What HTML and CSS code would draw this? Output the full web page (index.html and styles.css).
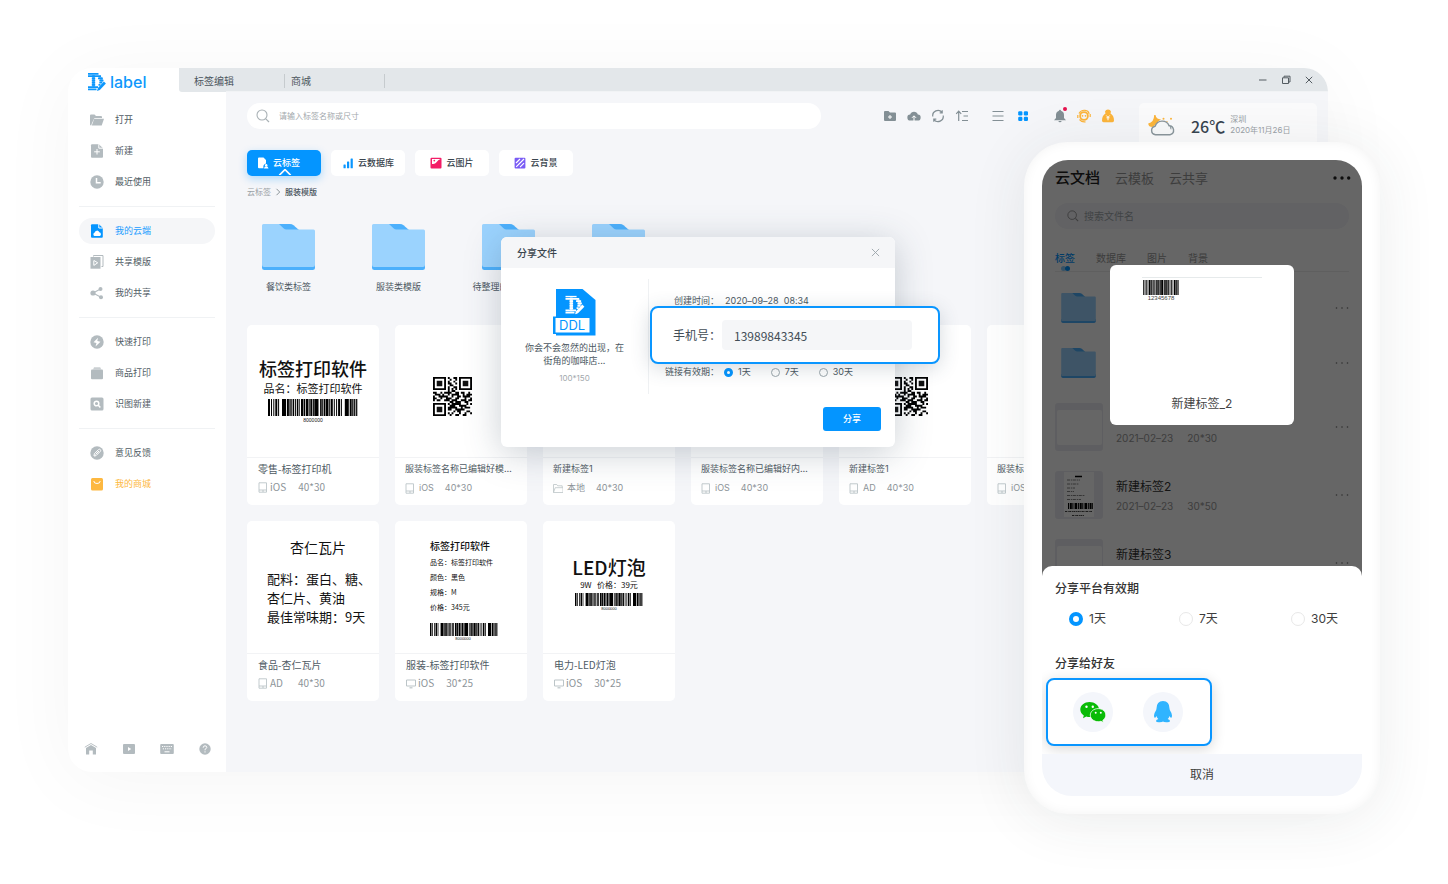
FILE: index.html
```html
<!DOCTYPE html>
<html lang="zh-CN">
<head>
<meta charset="utf-8">
<title>Dlabel</title>
<link rel="stylesheet" href="styles.css">
</head>
<body>
<svg class="defs" aria-hidden="true">
  <symbol id="mark" viewBox="0 0 18 18">
    <path d="M0 .9h10.500M0 3.100h13M3.800 5.300h3.400M10 5.300h4.800M3.800 7.500h3.400M11.300 7.500h4.200M3.800 9.700h3.400M11.300 9.700h3M3.800 11.900h3.400M10.500 11.900h2M0 14.100h10M0 16.300h8.500" fill="none" stroke="currentColor" stroke-width="1.700"/>
    <path d="M4.200 2h2.600v13H4.200z" fill="currentColor" opacity=".75"/>
    <path d="M12 2.500q3 2 3 6l-2.500 1.500q0-4-2-6z" fill="currentColor" opacity=".6"/>
    <path d="M15.900 8.600l2 2-6.100 6.300-2.800 1.100.9-3z" fill="currentColor"/>
  </symbol>
  <symbol id="folder" viewBox="0 0 53 46">
    <path d="M15 0h13q2 0 3.500 1.200L37 6v3H20z" fill="#4cb0fc"/>
    <path d="M0 40h53v3.500q0 2.500-2.500 2.500h-48Q0 46 0 43.500z" fill="#4cb0fc"/>
    <path d="M0 1.500Q0 0 1.500 0H17l4.500 4.200q1.300 1.200 3 1.200h27q1.500 0 1.500 1.500V41q0 2-2 2H2q-2 0-2-2z" fill="#9bd3fe"/>
  </symbol>
  <symbol id="bars" viewBox="0 0 90 17" preserveAspectRatio="none">
    <path d="M0 8.500H90" stroke="#000" stroke-width="17" stroke-dasharray="2 1 1 1.300 1 1 2 .8 1 2.900 4 .9 2 .5 1.300 .6 1 .6 1.200 .8 1 .9 1.300 .6 1 1.300 2.300 .5 1.500 .7 2.200 .5 1 .6 2 .6 1 .4 4.200 1.600 1.600 .5 1.200 .6 1.500 .5 2.500 .7 1 .6"/>
  </symbol>
  <symbol id="qr" viewBox="0 0 21 21">
    <path d="M.5.500h6v6h-6zM14.500.500h6v6h-6zM.5 14.500h6v6h-6z" fill="none" stroke="#000"/>
    <path d="M2 2h3v3H2zM16 2h3v3h-3zM2 16h3v3H2z"/>
    <path d="M8 .5h1M11 .5h2M9 1.500h1M12 1.500h1M8 2.500h1M11 2.500h1M8 3.500h2M12 3.500h1M9 4.500h2M8 5.500h1M11 5.500h2M8 6.500h1M10 6.500h1M12 6.500h1M8 7.500h1M10 7.500h2M0 8.500h2M4 8.500h1M6 8.500h4M12 8.500h2M15 8.500h2M19 8.500h1M1 9.500h3M5 9.500h1M8 9.500h1M10 9.500h4M16 9.500h1M18 9.500h3M0 10.500h1M3 10.500h5M10 10.500h1M13 10.500h2M16 10.500h4M0 11.500h2M4 11.500h1M7 11.500h3M12 11.500h2M17 11.500h1M20 11.500h1M0 12.500h1M2 12.500h2M6 12.500h3M10 12.500h3M15 12.500h3M19 12.500h2M9 13.500h2M12 13.500h3M17 13.500h2M8 14.500h1M10 14.500h5M18 14.500h1M20 14.500h1M9 15.500h3M14 15.500h4M8 16.500h5M15 16.500h1M17 16.500h3M8 17.500h2M12 17.500h5M11 18.500h1M13 18.500h2M18 18.500h2M8 19.500h1M10 19.500h1M14 19.500h1M17 19.500h1M20 19.500h1M9 20.500h1M12 20.500h2M16 20.500h2" stroke="#000" stroke-width="1.050"/>
  </symbol>
  <symbol id="magnifier" viewBox="0 0 14 14">
    <circle cx="6" cy="6" r="5" fill="none" stroke="currentColor" stroke-width="1.100"/><path d="M9.800 9.800L13 13" stroke="currentColor" stroke-width="1.200"/>
  </symbol>
  <symbol id="tablet" viewBox="0 0 10 11"><path d="M1 .8h7.500v9.400H1zM1 8h7.500" fill="none" stroke="currentColor" stroke-width=".9"/><path d="M4 9h2" stroke="currentColor"/></symbol>
  <symbol id="monitor" viewBox="0 0 10 11"><path d="M.5 2h9v6h-9z" fill="none" stroke="currentColor" stroke-width="1"/><path d="M3.500 9.800h3" stroke="currentColor" stroke-width="1.200"/></symbol>
  <symbol id="local" viewBox="0 0 10 11"><path d="M.5 9.500v-8h3.200l1 1.300h4.500v1.700M.5 9.500l1.700-4.800H10v4.800z" fill="none" stroke="currentColor" stroke-width=".8"/></symbol>
  <symbol id="more" viewBox="0 0 14 4"><circle cx="1.500" cy="2" r=".8"/><circle cx="7" cy="2" r=".8"/><circle cx="12.500" cy="2" r=".8"/></symbol>
</svg>

<div class="stage">
  <div class="window">
    <header class="titlebar">
      <div class="brand"><svg class="brand-mark"><use href="#mark"/></svg><span>label</span></div>
      <nav class="doc-tabs">
        <button class="doc-tab">标签编辑</button>
        <button class="doc-tab doc-tab-second">商城</button>
        <div class="win-controls">
          <button aria-label="最小化"><svg viewBox="0 0 10 10"><path d="M1 5h7.500"/></svg></button>
          <button aria-label="还原"><svg viewBox="0 0 10 10"><path d="M1.500 2.800h6v5.700h-6zM3 2.500V1.200h6v5.800H7.800"/></svg></button>
          <button aria-label="关闭"><svg viewBox="0 0 10 10"><path d="M1.800 1.800l6.400 6.400M8.200 1.800L1.800 8.200"/></svg></button>
        </div>
      </nav>
    </header>

    <div class="body">
      <aside class="sidebar">
        <nav class="menu">
          <div class="menu-group">
            <a class="item" href="#"><svg viewBox="0 0 14 14"><path d="M0 2.500q0-1 1-1h3.500L6 3h5q1 0 1 1v1H4.500L2 10l-.8 2.500Q0 12.500 0 11.500z"/><path d="M4.200 5.800H14l-2.300 6.700H1.800z"/></svg>打开</a>
            <a class="item" href="#"><svg viewBox="0 0 14 14"><path d="M1 1.200q0-1 1-1h6.800L13 4.200v8.500q0 1-1 1H2q-1 0-1-1z"/><path d="M7 5v5.500M4.200 7.800h5.600M8.800.200v4H13" class="cut"/></svg>新建</a>
            <a class="item" href="#"><svg viewBox="0 0 14 14"><circle cx="7" cy="7" r="6.700"/><path d="M6.500 3v4.800h4.200" class="cut thick"/></svg>最近使用</a>
          </div>
          <div class="menu-group">
            <a class="item active" href="#"><svg viewBox="0 0 14 14"><path d="M1 1.200q0-1 1-1h7L12.800 4v8.700q0 1-1 1H2q-1 0-1-1z"/><path d="M8.800 0v4h4" class="cut"/><path d="M4.500 12a1.700 1.700 0 010-3.200 2.500 2.500 0 014.800-.6 2 2 0 01.5 3.800z" class="paper"/></svg>我的云端</a>
            <a class="item" href="#"><svg viewBox="0 0 14 14"><path d="M3.500 1.500V.500H13V11.500H11.500" fill="none" stroke="currentColor"/><path d="M.5 2h10v11.700H.500z"/><path d="M3.800 5.500v5M4 5.500l3.700 2.300L4 10.300" class="cut"/></svg>共享模版</a>
            <a class="item" href="#"><svg viewBox="0 0 14 14"><circle cx="3" cy="7" r="2.600"/><circle cx="10.500" cy="3" r="2"/><circle cx="11" cy="11.200" r="2"/><path d="M10.500 3L3 7l8 4.200" fill="none" stroke="currentColor" stroke-width="1.100"/></svg>我的共享</a>
          </div>
          <div class="menu-group">
            <a class="item" href="#"><svg viewBox="0 0 14 14"><circle cx="7" cy="7" r="6.700"/><path d="M8 2.800L3.500 7.200l3 .8-1 3.400 5-4.600-3.200-.9z" class="paper"/></svg>快速打印</a>
            <a class="item" href="#"><svg viewBox="0 0 14 14"><path d="M3 3.500l1-2.200h6.200l1 2.200z" opacity=".7"/><path d="M1 4.500q0-1 1-1h10q1 0 1 1v7.700q0 1-1 1H2q-1 0-1-1z"/></svg>商品打印</a>
            <a class="item" href="#"><svg viewBox="0 0 14 14"><rect x=".5" y=".5" width="13" height="13" rx="1.500"/><circle cx="6.500" cy="6.500" r="2.300" class="cut thick"/><path d="M8.300 8.300l2 2.200" class="cut thick"/></svg>识图新建</a>
          </div>
          <div class="menu-group">
            <a class="item" href="#"><svg viewBox="0 0 14 14"><circle cx="7" cy="7" r="6.700"/><path d="M4 10l.3-2.200L8.500 3.600q1-.8 1.800 0t0 1.800L6 9.700zM5.500 8.500L9 5" class="cut"/></svg>意见反馈</a>
            <a class="item mall" href="#"><svg viewBox="0 0 14 14"><rect x="1" y="1" width="12" height="12.500" rx="1.500"/><path d="M3.800 4q0 2.500 3.200 2.500T10.200 4" class="cut"/></svg>我的商城</a>
          </div>
        </nav>
        <div class="side-tools">
          <button aria-label="主页"><svg viewBox="0 0 14 14"><path d="M.8 5.200L7 1.500l6.200 3.700" fill="none" stroke="currentColor" stroke-width=".9"/><path d="M2 6l5-3 5 3v6.500H8.800V8.500H5.200v4H2z"/></svg></button>
          <button aria-label="视频"><svg viewBox="0 0 14 14"><rect x="1" y="2" width="12" height="10" rx="1"/><path d="M6 5l3.200 2L6 9z" class="paper"/></svg></button>
          <button aria-label="键盘"><svg viewBox="0 0 14 14"><rect x=".2" y="2" width="13.600" height="10" rx="1"/><path d="M2 4.500h10M2.800 6.800h9" class="cut" stroke-dasharray="1.200 1"/><path d="M4.500 9.800h5" class="cut"/></svg></button>
          <button aria-label="帮助"><svg viewBox="0 0 14 14"><circle cx="7" cy="7" r="5.700"/><path d="M5.200 5.700q0-1.900 1.800-1.900t1.800 1.600q0 1-1.800 1.900v1M7 9.300v1.200" class="cut"/></svg></button>
        </div>
      </aside>

      <main class="main">
        <div class="toolbar">
          <label class="search"><svg><use href="#magnifier"/></svg><input type="text" aria-label="搜索标签" placeholder="请输入标签名称或尺寸"></label>
          <div class="tools tools-file">
            <button aria-label="新建文件夹"><svg viewBox="0 0 14 14"><path d="M1 3q0-1 1-1h3.500L7 3.500h5q1 0 1 1V11q0 1-1 1H2q-1 0-1-1z"/><path d="M7 6v4M5 8h4" class="cut"/></svg></button>
            <button aria-label="上传"><svg viewBox="0 0 14 14"><path d="M3.500 11.500a3 3 0 01-.3-6 4 4 0 017.600 0 3 3 0 01-.3 6z"/><path d="M7 12.500V7M5 8.800l2-2 2 2" class="cut"/></svg></button>
            <button aria-label="刷新"><svg viewBox="0 0 14 14" class="line"><path d="M1.800 7.500A5.200 5.200 0 0111 3.400M12.200 6.500A5.200 5.200 0 013 10.600M11.200 1.200v2.600H8.700M2.800 12.800v-2.600h2.500"/></svg></button>
            <button aria-label="排序"><svg viewBox="0 0 14 14" class="line"><path d="M3.700 12V2M1.200 4.800L3.700 2.200l2.500 2.600M7 2.500h6M8.500 7H13M7 11.500h6"/></svg></button>
          </div>
          <div class="tools tools-view">
            <button aria-label="列表"><svg viewBox="0 0 14 14" class="line"><path d="M1.500 2.500h11M1.500 7h11M1.500 11.500h11"/></svg></button>
            <button class="on" aria-label="网格"><svg viewBox="0 0 14 14"><rect x="2.200" y="2.200" width="4.200" height="4.200" rx="1.200"/><rect x="7.800" y="2.200" width="4.200" height="4.200" rx="1.200"/><rect x="2.200" y="7.800" width="4.200" height="4.200" rx="1.200"/><rect x="7.800" y="7.800" width="4.200" height="4.200" rx="1.200"/></svg></button>
          </div>
          <div class="tools tools-user">
            <button class="bell" aria-label="通知"><svg viewBox="0 0 14 14"><path d="M7 .8q1 0 1 1Q11 2.800 11 6v3l2 2.200H1L3 9V6q0-3.200 3-4.200 0-1 1-1zM5.300 12h3.400q-.5 1.200-1.700 1.200T5.300 12z"/></svg></button>
            <button class="gold" aria-label="客服"><svg viewBox="0 0 14 14"><circle cx="7" cy="7" r="3.900" fill="none" stroke="currentColor" stroke-width="1.800"/><path d="M2 4.500Q4 .8 8 1.300t4 3.700M.8 6v3M13.200 5v3M2.500 10.500Q5 13.500 8.500 12.800" fill="none" stroke="currentColor" stroke-width="1.200"/><circle cx="5.500" cy="6.800" r=".9"/><circle cx="8.500" cy="6.800" r=".9"/></svg></button>
            <button class="gold" aria-label="钱袋"><svg viewBox="0 0 14 14"><path d="M4 2.500Q4.700.5 7 .5t3 2L9.500 4.500Q13 6.500 13 11.500q0 1.700-1.500 1.700h-9Q1 13.200 1 11.500 1 6.500 4.500 4.500z"/><path d="M5.300 6.500L7 8.300l1.700-1.800M5.500 8.800h3M7 8.300v3" class="cut"/></svg></button>
          </div>
          <section class="weather">
            <svg viewBox="0 0 28 24"><path d="M7.500 1q.5 4 5.500 4.500-3 1-4.500 4.500l-4 3Q.5 13 .2 9.500 6 8.500 6.200 1z" fill="#fcb53b"/><circle cx="15.500" cy="4.800" r="1" fill="#fcb53b"/><circle cx="23" cy="4.800" r="1" fill="#fcb53b"/><circle cx="19" cy="7.600" r=".7" fill="#fcb53b"/><path d="M7.500 20.700a4.300 4.300 0 01-.4-8.500 7.500 7.500 0 0114-.5 4.600 4.600 0 011.200 9z" fill="#f8f9fa" stroke="#8a969c" stroke-width="1.400"/><path d="M20 10.300q3.300 1.300 3 5" fill="none" stroke="#8a969c" stroke-width="1"/></svg>
            <strong>26℃</strong>
            <p>深圳<br>2020年11月26日</p>
          </section>
        </div>

        <nav class="filters">
          <button class="filter current"><svg viewBox="0 0 12 12"><path d="M1 1.500Q1 .5 2 .5h4.500L9 3v3.500a4 4 0 00-2.500 4.800H2q-1 0-1-1z"/><path d="M7 11.500q.3-2.300 2.200-2.300t2.300 2.300z"/><circle cx="9.200" cy="8.300" r="1.200"/></svg>云标签</button>
          <button class="filter"><svg class="blue" viewBox="0 0 12 12"><rect x="1.500" y="7.500" width="2.200" height="3.800" rx=".5"/><rect x="5" y="4.500" width="2.200" height="6.800" rx=".5"/><rect x="8.600" y="1.500" width="2.200" height="9.800" rx=".5"/></svg>云数据库</button>
          <button class="filter"><svg viewBox="0 0 12 12"><rect x=".5" y=".8" width="11" height="10.600" rx="1" fill="#f31d67"/><path d="M2 2h8.500q-2.500 1-4 3.300T2 7z" fill="#fff"/><circle cx="4.300" cy="3.600" r=".9" fill="#f31d67"/></svg>云图片</button>
          <button class="filter"><svg viewBox="0 0 12 12"><rect x=".6" y=".8" width="10.800" height="10.600" rx="1" fill="#7a5cf5"/><path d="M2 6l4-4M2.200 9.800l7.800-7.800M6 10.200l4-4" stroke="#fff" stroke-width="1.200"/></svg>云背景</button>
        </nav>

        <div class="crumbs"><a href="#">云标签</a><svg viewBox="0 0 6 8"><path d="M1.500.8L4.700 4 1.500 7.200"/></svg><span>服装模版</span></div>

        <div class="folders">
          <a class="folder" href="#"><svg><use href="#folder"/></svg><span>餐饮类标签</span></a>
          <a class="folder" href="#"><svg><use href="#folder"/></svg><span>服装类模版</span></a>
          <a class="folder" href="#"><svg><use href="#folder"/></svg><span>待整理的标签模版</span></a>
          <a class="folder" href="#"><svg><use href="#folder"/></svg><span>其他</span></a>
        </div>

        <div class="cards">
          <article class="card alt">
            <div class="art art-soft"><b>标签打印软件</b><span>品名：标签打印软件</span><svg class="bar"><use href="#bars"/></svg><i>8000000</i></div>
            <div class="foot"><h3>零售-标签打印机</h3><p><svg><use href="#tablet"/></svg><span>iOS</span><span>40*30</span></p></div>
          </article>
          <article class="card">
            <div class="art art-qr"><svg><use href="#qr"/></svg></div>
            <div class="foot"><h3>服装标签名称已编辑好模…</h3><p><svg><use href="#tablet"/></svg><span>iOS</span><span>40*30</span></p></div>
          </article>
          <article class="card">
            <div class="art"></div>
            <div class="foot"><h3>新建标签1</h3><p><svg><use href="#local"/></svg><span>本地</span><span>40*30</span></p></div>
          </article>
          <article class="card">
            <div class="art"></div>
            <div class="foot"><h3>服装标签名称已编辑好内…</h3><p><svg><use href="#tablet"/></svg><span>iOS</span><span>40*30</span></p></div>
          </article>
          <article class="card">
            <div class="art art-qr art-qr-right"><svg><use href="#qr"/></svg></div>
            <div class="foot"><h3>新建标签1</h3><p><svg><use href="#tablet"/></svg><span>AD</span><span>40*30</span></p></div>
          </article>
          <article class="card">
            <div class="art"></div>
            <div class="foot"><h3>服装标签</h3><p><svg><use href="#tablet"/></svg><span>iOS</span></p></div>
          </article>
        </div>
        <div class="cards">
          <article class="card alt">
            <div class="art art-food"><b>杏仁瓦片</b><span>配料：蛋白、糖、<br>杏仁片、黄油<br>最佳常味期：9天</span></div>
            <div class="foot"><h3>食品-杏仁瓦片</h3><p><svg><use href="#tablet"/></svg><span>AD</span><span>40*30</span></p></div>
          </article>
          <article class="card alt">
            <div class="art art-wear"><b>标签打印软件</b><span>品名：标签打印软件<br>颜色：黑色<br>规格：M<br>价格：345元</span><svg class="bar"><use href="#bars"/></svg><i>8000000</i></div>
            <div class="foot"><h3>服装-标签打印软件</h3><p><svg><use href="#monitor"/></svg><span>iOS</span><span>30*25</span></p></div>
          </article>
          <article class="card alt">
            <div class="art art-led"><b>LED灯泡</b><span>9W&nbsp;&nbsp; 价格：39元</span><svg class="bar"><use href="#bars"/></svg><i>8000000</i></div>
            <div class="foot"><h3>电力-LED灯泡</h3><p><svg><use href="#monitor"/></svg><span>iOS</span><span>30*25</span></p></div>
          </article>
        </div>

        <section class="dialog" role="dialog" aria-label="分享文件">
          <header><h2>分享文件</h2><button aria-label="关闭"><svg viewBox="0 0 10 10"><path d="M1 1l8 8M9 1L1 9"/></svg></button></header>
          <div class="dialog-body">
            <div class="file">
              <svg viewBox="0 0 43 47">
                <path d="M3 0h26.500L42.500 11v35.500H3z" fill="#0495ff"/>
                <path d="M0 27.500h3v17.500H0z" fill="#0495ff"/>
                <path d="M2.500 29H36.500V43.500H2.500z" fill="#fff"/>
                <svg class="white" x="12" y="6.500" width="20" height="19"><use href="#mark"/></svg>
                <text x="6" y="41" class="ddl">DDL</text>
              </svg>
              <p>你会不会忽然的出现，在<br>街角的咖啡店...</p>
              <small>100*150</small>
            </div>
            <form class="share-form">
              <div class="row row-date"><span class="row-label">创建时间：</span><span>2020–09–28&nbsp; 08:34</span></div>
              <div class="row row-period"><span class="row-label">链接有效期：</span>
                <label><input type="radio" name="period" checked>1天</label>
                <label><input type="radio" name="period">7天</label>
                <label><input type="radio" name="period">30天</label>
              </div>
              <button type="button" class="submit">分享</button>
            </form>
          </div>
          <div class="phone-field"><label for="tel">手机号：</label><input id="tel" type="text" value="13989843345"></div>
        </section>
      </main>
    </div>
  </div>

  <div class="phone">
    <div class="screen">
      <div class="app">
        <header class="app-head"><h1>云文档</h1><a href="#">云模板</a><a href="#">云共享</a><button aria-label="更多"><svg viewBox="0 0 18 4"><circle cx="2" cy="2" r="1.700"/><circle cx="9" cy="2" r="1.700"/><circle cx="15.700" cy="2" r="1.700"/></svg></button></header>
        <label class="app-search"><svg><use href="#magnifier"/></svg><input type="text" aria-label="搜索文件" placeholder="搜索文件名"></label>
        <nav class="app-tabs"><a class="sel" href="#">标签</a><a href="#">数据库</a><a href="#">图片</a><a href="#">背景</a></nav>
        <ul class="app-folders">
          <li><svg class="mini"><use href="#folder"/></svg><svg class="more"><use href="#more"/></svg></li>
          <li><svg class="mini"><use href="#folder"/></svg><svg class="more"><use href="#more"/></svg></li>
        </ul>
        <ul class="app-files">
          <li><div class="thumb"></div><div class="info"><h4>新建标签1</h4><p>2021–02–23<span>20*30</span></p></div><svg class="more"><use href="#more"/></svg></li>
          <li><div class="thumb receipt"><svg viewBox="0 0 30 44"><path d="M11 4h7" stroke="#000" stroke-width="1.500"/><path d="M3 7.500h13M3 11.500h12M3 15.500h8M3 19h7M3 23h18M3 27h14" stroke="#666" stroke-width=".8" stroke-dasharray="3 .8 1.500 .6"/><path d="M4 33.500h25" stroke="#000" stroke-width="6" stroke-dasharray="1 .8 2 .6 1 1.200 2.500 .8"/><path d="M1 39h27M8 43h12" stroke="#444" stroke-width="1.200" stroke-dasharray="2 .7 1 .5"/></svg></div><div class="info"><h4>新建标签2</h4><p>2021–02–23<span>30*50</span></p></div><svg class="more"><use href="#more"/></svg></li>
          <li><div class="thumb"></div><div class="info"><h4>新建标签3</h4><p>2021–02–23<span>20*30</span></p></div><svg class="more"><use href="#more"/></svg></li>
        </ul>
      </div>
      <div class="shade"></div>
      <div class="preview">
        <div class="preview-art"><svg><use href="#bars"/></svg><span>12345678</span></div>
        <p>新建标签_2</p>
      </div>
      <section class="sheet">
        <h2>分享平台有效期</h2>
        <div class="sheet-radios">
          <label><input type="radio" name="term" checked>1天</label>
          <label><input type="radio" name="term">7天</label>
          <label><input type="radio" name="term">30天</label>
        </div>
        <h2>分享给好友</h2>
        <div class="friends">
          <button aria-label="微信"><svg viewBox="0 0 26 22"><path d="M9.500 1C4.500 1 .3 4.200.3 8.500c0 2.500 1.400 4.600 3.500 6L3 17.200l3.300-1.700q1.600.5 3.200.5C14.500 16 19 12.800 19 8.500S14.500 1 9.500 1z" fill="#09bb07"/><circle cx="6.500" cy="5.700" r="1.200" fill="#fff"/><circle cx="12.800" cy="5.700" r="1.200" fill="#fff"/><path d="M18.200 7.600c-4.400 0-7.900 2.900-7.900 6.500s3.500 6.600 7.900 6.600q1.500 0 2.700-.4l2.500 1.300-.6-2.200c1.900-1.200 3-3.100 3-5.300 0-3.600-3.300-6.500-7.600-6.500z" fill="#09bb07" stroke="#fff" stroke-width=".8"/><circle cx="15.700" cy="11.800" r="1" fill="#fff"/><circle cx="20.800" cy="11.800" r="1" fill="#fff"/></svg></button>
          <button aria-label="QQ"><svg viewBox="0 0 26 22"><path d="M13 0Q6.500.3 6.500 7.500L6.200 9Q4.200 12 4 14.500q0 2.500 1 2.300.8-.3 1.500-1.800.5 2 1.800 3-2.600 1-2.300 2.300.5 1.200 3.500 1t3.500-.9q.5.700 3.500.9t3.500-1q.3-1.300-2.300-2.300 1.300-1 1.800-3 .7 1.500 1.500 1.800 1 .2 1-2.300Q21.800 12 19.800 9l-.3-1.500Q19.500.3 13 0z" fill="#30b4ff"/></svg></button>
        </div>
        <button class="cancel">取消</button>
      </section>
    </div>
  </div>
</div>
</body>
</html>
```
FILE: styles.css
```css
* { box-sizing: border-box; }
body, h1, h2, h3, h4, p, ul { margin: 0; padding: 0; font-weight: 400; }
body { background: #fff; color: #4b5761; font: 9px/14px Inter, "Noto Sans CJK SC", sans-serif; font-feature-settings: "calt" 0; }
ul { list-style: none; }
a { color: inherit; text-decoration: none; }
button, input { font: inherit; font-feature-settings: inherit; color: inherit; border: 0; background: none; padding: 0; margin: 0; outline: 0; }
svg { display: block; fill: currentColor; flex: none; }
.defs { position: absolute; width: 0; height: 0; }
.cut { fill: none; stroke: #fff; stroke-width: 1; }
.cut.thick { stroke-width: 1.5; }
.paper { fill: #fff; }
.white { color: #fff; }
.line { fill: none; stroke: currentColor; stroke-width: 1.2; }

.stage { position: relative; min-height: 100vh; padding: 68px 120px 112px 68px; overflow: hidden; }

/* Desktop window */
.window { display: flex; flex-direction: column; min-height: 704px; border-radius: 24px; overflow: hidden; background: #fff; box-shadow: 0 8px 80px rgba(0, 0, 0, .045); }
.titlebar { display: flex; height: 24px; }
.brand { display: flex; align-items: center; gap: 4px; width: 111px; padding: 3px 0 0 20px; color: #0d97fc; font-size: 16px; font-weight: 500; }
.brand-mark { width: 18px; height: 18px; }
.doc-tabs { flex: 1; display: flex; align-items: center; background: #e3e7ea; border-bottom-left-radius: 3px; }
.doc-tab { width: 106px; height: 14px; margin-top: 2px; padding-left: 15px; border-right: 1px solid #c6cbce; text-align: left; font-size: 10px; color: #4c565e; }
.doc-tab-second { width: 100px; padding-left: 6px; }
.win-controls { display: flex; gap: 13px; margin: 0 14px 0 auto; }
.win-controls svg { width: 10px; height: 10px; fill: none; stroke: #545c62; stroke-width: 1; }
.body { flex: 1; display: flex; }

.sidebar { display: flex; flex-direction: column; justify-content: space-between; width: 158px; padding: 15px 11px 16px; }
.menu-group { display: flex; flex-direction: column; gap: 5px; }
.menu-group + .menu-group { margin-top: 11px; padding-top: 11px; border-top: 1px solid #f0f2f4; }
.item { display: flex; align-items: center; gap: 11px; height: 26px; padding-left: 11px; border-radius: 13px; color: #4f5b64; }
.item svg { width: 14px; height: 14px; color: #b3bbbf; }
.item.active { background: #f5f6f8; color: #1a9cff; }
.item.active svg { color: #0495ff; }
.item.mall, .item.mall svg { color: #fdb840; }
.side-tools { display: flex; gap: 24px; padding-left: 5px; color: #b3bbbf; }
.side-tools svg { width: 14px; height: 14px; }

.main { position: relative; flex: 1; min-width: 0; padding: 11px 11px 0 21px; background: #f5f6f9; border-top: 1px solid #f1f3f5; margin-top: -1px; }
.toolbar { display: flex; align-items: flex-start; height: 26px; }
.search { flex: 1; display: flex; align-items: center; gap: 9px; height: 26px; padding-left: 9px; border-radius: 13px; background: #fff; color: #a9b1b5; }
.search svg { width: 14px; height: 14px; }
.search input { flex: 1; font-size: 8px; }
input::placeholder { color: #a3a9ad; opacity: 1; }
.tools { display: flex; align-items: center; gap: 10px; height: 26px; color: #838f95; }
.tools svg { width: 14px; height: 14px; }
.tools-file { margin-left: 62px; }
.tools-view { gap: 11px; margin-left: 22px; }
.tools-user { margin: 0 24px 0 23px; }
.tools .on { color: #0495ff; }
.tools .gold { color: #fcb53b; }
.bell { position: relative; }
.bell::after { content: ""; position: absolute; top: -2px; right: 0; width: 4px; height: 4px; border-radius: 50%; background: #e5134f; }
.weather { display: flex; align-items: flex-start; width: 178px; height: 60px; padding: 11px 0 0 9px; border-radius: 5px; background: #fbfbfc; }
.weather svg { width: 28px; height: 24px; }
.weather strong { margin: 2px 5px 0 15px; font: 500 16px/20px "Noto Sans CJK SC", sans-serif; color: #38444f; }
.weather p { font-size: 8px; line-height: 11px; color: #9aa1a6; white-space: nowrap; }

.filters { display: flex; gap: 10px; margin-top: 21px; }
.filter { display: flex; align-items: center; justify-content: center; gap: 4px; width: 74px; height: 26px; border-radius: 5px; background: #fff; font-weight: 500; color: #39444d; }
.filter svg { width: 12px; height: 12px; }
.filter .blue { color: #0a96ff; }
.filter.current { position: relative; justify-content: flex-start; padding-left: 10px; background: #0495ff; color: #fff; box-shadow: 0 3px 8px rgba(4, 149, 255, .3); }
.filter.current::after { content: ""; position: absolute; left: 33px; bottom: -4px; width: 6px; height: 6px; border: 2px solid #f5f6f9; border-radius: 2px; background: #0495ff; transform: rotate(45deg); clip-path: polygon(0 0, 100% 0, 0 100%); }
.crumbs { display: flex; align-items: center; gap: 4px; margin-top: 10px; font-size: 8px; line-height: 12px; color: #49545d; }
.crumbs a { color: #9aa1a6; }
.crumbs svg { width: 6px; height: 8px; fill: none; stroke: #8b9499; }
.crumbs span { font-weight: 500; }

.folders { display: flex; gap: 57px; margin: 26px 0 31px 15px; }
.folder { display: flex; flex-direction: column; align-items: center; gap: 10px; width: 53px; white-space: nowrap; }
.folder svg { width: 53px; height: 46px; }

.cards { display: grid; grid-template-columns: repeat(6, 132px); gap: 16px; }
.cards + .cards { margin-top: 16px; }
.card { height: 180px; border-radius: 5px; background: #fff; }
.art { display: flex; flex-direction: column; align-items: center; height: 132px; color: #111; font-family: "Noto Sans CJK SC", sans-serif; }
.art b { font-weight: 500; white-space: nowrap; }
.art i { font: 5px/8px "Liberation Sans", sans-serif; }
.foot { padding: 4px 10px 0; border-top: 1px solid #f2f3f5; }
.foot h3 { font-size: 9px; white-space: nowrap; color: #4f5b64; }
.foot p { display: flex; align-items: center; margin-top: 5px; color: #8d9499; }
.foot p svg { width: 10px; height: 11px; margin-right: 4px; color: #bcc5c8; }
.foot p span + span { margin-left: 11px; }
.alt .foot { padding: 4px 11px 0; }
.alt .foot, .alt .foot h3 { font-family: "Noto Sans CJK SC", sans-serif; font-size: 10px; }
.alt .foot p { margin-top: 4px; }
.alt .foot p svg { margin-right: 2px; }
.alt .foot p span { min-width: 16px; }
.alt .foot p span + span { margin-left: 12px; }
.art-soft { padding-top: 31px; }
.art-soft b { font-size: 18px; line-height: 24px; }
.art-soft span { font-size: 11px; line-height: 16px; margin-bottom: 3px; }
.art-soft .bar { width: 90px; height: 17px; }
.art-qr { justify-content: center; padding: 10px 18px 0 0; }
.art-qr-right { padding: 10px 0 0 6px; }
.art-qr svg { width: 39px; height: 39px; }
.art-food { padding-top: 17px; }
.art-food b { font-size: 14px; line-height: 18px; font-weight: 400; margin: 0 0 13px 10px; }
.art-food span { font-size: 13px; line-height: 19px; white-space: nowrap; padding-left: 12px; }
.art-wear { align-items: flex-start; padding: 18px 0 0 35px; }
.art-wear b { font-size: 10px; }
.art-wear span { margin: 2px 0 8px; font-size: 7px; line-height: 15px; }
.art-wear .bar, .art-led .bar { width: 68px; height: 13px; }
.art-wear i { width: 66px; text-align: center; font-size: 4px; line-height: 5px; }
.art-led { padding-top: 34px; }
.art-led b { font-size: 19px; line-height: 24px; }
.art-led span { font-size: 8px; line-height: 12px; margin-bottom: 2px; }
.art-led i { font-size: 4px; line-height: 5px; }

/* Share dialog */
.dialog { position: absolute; left: 275px; top: 145px; width: 394px; border-radius: 6px; background: #fff; box-shadow: 0 6px 36px rgba(50, 70, 90, .26); }
.dialog header { display: flex; align-items: center; justify-content: space-between; height: 31px; padding: 0 15px 0 16px; border-radius: 6px 6px 0 0; background: #f5f6f8; }
.dialog h2 { font-size: 10px; font-weight: 500; color: #39444d; }
.dialog header svg { width: 9px; height: 9px; fill: none; stroke: #9aa4a9; stroke-width: 1; }
.dialog-body { display: flex; padding: 11px 0 16px; }
.file { display: flex; flex-direction: column; align-items: center; gap: 5px; width: 148px; height: 115px; padding-top: 10px; border-right: 1px solid #eff1f3; text-align: center; }
.file > svg { width: 43px; height: 47px; }
.ddl { font: 13px Inter, sans-serif; fill: #0495ff; }
.file p { line-height: 13px; }
.file small { font-size: 8px; line-height: 12px; color: #a3a9ad; }
.share-form { flex: 1; display: flex; flex-direction: column; padding: 15px 14px 0 16px; }
.row { display: flex; align-items: center; height: 14px; }
.row-label { width: 54px; text-align: right; white-space: nowrap; }
.row-date { gap: 6px; }
.row-period { gap: 20px; margin: 57px 0 28px; }
.row-period .row-label { margin-right: -15px; }
.row label { display: flex; align-items: center; gap: 5px; white-space: nowrap; }
input[type="radio"] { appearance: none; width: 9px; height: 9px; border: 1px solid #9ba6ab; border-radius: 50%; background: #fff; }
input[type="radio"]:checked { border: 3px solid #0495ff; }
.submit { align-self: flex-end; width: 58px; height: 24px; border-radius: 3px; background: #0495ff; color: #fff; font-weight: 500; }
.phone-field { position: absolute; left: 149px; top: 69px; display: flex; align-items: center; gap: 1px; width: 290px; height: 58px; padding: 0 26px 0 21px; border: 2px solid #0a96ff; border-radius: 8px; background: #fff; box-shadow: 0 4px 20px rgba(50, 70, 90, .2); font: 12px/18px "Noto Sans CJK SC", sans-serif; color: #424d56; }
.phone-field label { flex: none; }
.phone-field input { flex: 1; min-width: 0; height: 30px; padding: 0 12px; border-radius: 4px; background: #f5f6f8; }

/* Phone */
.phone { position: absolute; top: 142px; right: 68px; width: 356px; padding: 18px; border-radius: 44px; background: #fff; box-shadow: 0 6px 60px rgba(40, 50, 60, .09), inset 0 0 12px rgba(0, 0, 0, .05); }
.screen { position: relative; height: 636px; border-radius: 26px 26px 30px 30px; overflow: hidden; background: #fff; }
.app { padding: 0 13px; color: #999; }
.app-head { display: flex; align-items: center; gap: 15px; height: 36px; font-size: 13px; line-height: 18px; }
.app-head h1 { font-size: 15px; font-weight: 500; color: #222; }
.app-head button { margin: 0 -2px 0 auto; color: #222; }
.app-head svg { width: 18px; height: 4px; }
.app-search { display: flex; align-items: center; gap: 5px; height: 26px; margin-top: 7px; padding-left: 12px; border-radius: 13px; background: #f4f4fa; }
.app-search svg { width: 12px; height: 12px; }
.app-search input { flex: 1; font-size: 10px; }
.app-tabs { display: flex; align-items: center; gap: 21px; height: 27px; margin-top: 16px; border-bottom: 1px solid #eee; font-size: 10px; }
.app-tabs .sel { position: relative; color: #0495ff; font-weight: 500; }
.app-tabs .sel::after { content: ""; position: absolute; left: 10px; top: 15px; width: 5px; height: 5px; border-radius: 50%; background: #0495ff; box-shadow: -4px 0 0 #8acdff; }
.app-folders { padding-top: 8px; }
.app-folders li { display: flex; align-items: center; justify-content: space-between; height: 55px; padding-left: 6px; }
.mini { width: 35px; height: 30px; }
.more { width: 14px; height: 4px; color: #777; margin-left: auto; }
.app-files { display: flex; flex-direction: column; gap: 20px; margin-top: 13px; }
.app-files li { display: flex; align-items: center; gap: 13px; }
.thumb { width: 48px; height: 48px; padding: 7px 1px 6px 2px; border-radius: 3px; background: #ececf2; }
.thumb::before { content: ""; display: block; height: 35px; border-radius: 2px; background: #fff; }
.thumb.receipt { padding: 1px 9px; }
.thumb.receipt::before { display: none; }
.thumb svg { width: 30px; height: 45px; background: #fff; }
.info h4 { font-size: 12px; line-height: 18px; color: #333; }
.info p { margin-top: 3px; font-size: 10px; line-height: 14px; }
.info span { margin-left: 14px; }
.shade { position: absolute; inset: 0 0 60px; background: rgba(0, 0, 0, .6); }
.preview { position: absolute; left: 68px; top: 105px; display: flex; flex-direction: column; justify-content: space-between; width: 184px; height: 160px; padding: 12px 32px; border-radius: 6px; background: #fff; text-align: center; font-size: 12px; line-height: 18px; color: #444; }
.preview-art { display: flex; flex-direction: column; align-items: flex-start; padding: 2px 1px; border-top: 1px solid #e6eaeb; }
.preview-art svg { width: 36px; height: 15px; }
.preview-art span { width: 36px; font: 6px/7px "Liberation Sans", sans-serif; }
.sheet { position: absolute; left: 0; right: 0; bottom: 0; padding-top: 14px; border-radius: 10px 10px 0 0; background: #fff; color: #3e3e3e; font-size: 12px; line-height: 16px; }
.sheet h2 { padding-left: 13px; font-size: 12px; line-height: 18px; font-weight: 500; color: #333; }
.sheet-radios { display: flex; justify-content: space-between; margin: 13px 24px 28px 27px; }
.sheet-radios label { display: flex; align-items: center; gap: 6px; }
.sheet-radios input[type="radio"] { width: 14px; height: 14px; border-color: #e8e8e8; }
.sheet-radios input[type="radio"]:checked { border: 4px solid #0495ff; }
.friends { display: flex; align-items: center; gap: 30px; width: 166px; height: 68px; margin: 5px 0 8px 4px; padding-left: 25px; border: 2px solid #0a96ff; border-radius: 8px; background: #fff; box-shadow: 0 3px 14px rgba(0, 0, 0, .16); }
.friends button { display: grid; place-items: center; width: 40px; height: 40px; border-radius: 50%; background: #f4f6fb; }
.friends svg { width: 26px; height: 22px; }
.cancel { display: block; width: 100%; height: 42px; background: #f4f6fb; }
```
